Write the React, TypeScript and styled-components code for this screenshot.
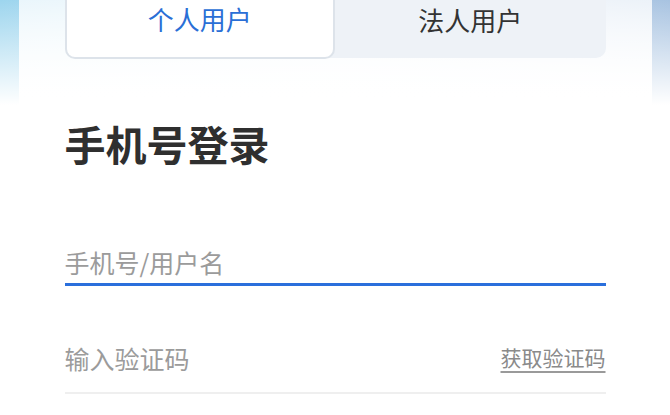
import React from 'react';
import styled, { createGlobalStyle } from 'styled-components';

const GlobalStyle = createGlobalStyle`
  html, body {
    margin: 0;
    padding: 0;
    width: 670px;
    height: 415px;
    overflow: hidden;
    font-family: "Noto Sans CJK SC", "Noto Sans", sans-serif;
    background:
      linear-gradient(to bottom, rgba(255, 255, 255, 0) 0px, #fff 105px),
      linear-gradient(to right, #9dd5ee 0%, #cfe6f4 50%, #a8c3e1 100%);
  }
`;

const Page = styled.div`
  display: flex;
  justify-content: center;
  height: 415px;
`;

const Card = styled.div`
  width: 633px;
  display: flex;
  flex-direction: column;
  padding: 0 46px;
  box-sizing: border-box;
  background: linear-gradient(to bottom, rgba(255, 255, 255, 0.78) 0px, #fff 100px);
`;

const Tabs = styled.div`
  display: grid;
  grid-template-columns: 1fr 1fr;
  height: 58px;
  background: #eef2f7;
  border-radius: 0 0 10px 10px;
`;

const Tab = styled.div<{ $active?: boolean }>`
  display: flex;
  align-items: center;
  justify-content: center;
  padding-bottom: 20px;
  box-sizing: border-box;
  font-size: 26px;
  color: ${p => (p.$active ? '#2a6fd6' : '#333')};
  background: ${p => (p.$active ? '#fff' : 'transparent')};
  border: ${p => (p.$active ? '2px solid #dde3ea' : 'none')};
  border-top: none;
  border-radius: 0 0 10px 10px;
`;

const Title = styled.h1`
  margin: 65px 0 0;
  font-size: 41px;
  line-height: 40px;
  font-weight: 700;
  color: #2f2f2f;
`;

const Field = styled.div<{ $focused?: boolean; $gap: number; $lift: number }>`
  display: flex;
  align-items: flex-end;
  justify-content: space-between;
  box-sizing: border-box;
  height: 59px;
  margin-top: ${p => p.$gap}px;
  padding-bottom: ${p => p.$lift}px;
  border-bottom: ${p => (p.$focused ? '3px solid #2a6fdc' : '2px solid #efefef')};
`;

const Input = styled.input`
  flex: 1;
  border: none;
  outline: none;
  background: transparent;
  padding: 0;
  height: 35px;
  font-family: inherit;
  font-size: 25px;
  color: #333;

  &::placeholder {
    color: #9b9b9b;
  }
`;

const CodeLink = styled.a`
  line-height: 35px;
  font-size: 21px;
  color: #8a8a8a;
  text-decoration: underline;
  text-decoration-color: #9a9a9a;
  text-underline-offset: 5px;
  text-decoration-thickness: 2px;
`;

export default function App(): React.ReactElement {
  return (
    <Page>
      <GlobalStyle />
      <Card>
        <Tabs>
          <Tab $active>个人用户</Tab>
          <Tab>法人用户</Tab>
        </Tabs>
        <Title>手机号登录</Title>
        <Field $focused $gap={64} $lift={4}>
          <Input placeholder="手机号/用户名" />
        </Field>
        <Field $gap={49} $lift={17}>
          <Input placeholder="输入验证码" />
          <CodeLink>获取验证码</CodeLink>
        </Field>
      </Card>
    </Page>
  );
}
